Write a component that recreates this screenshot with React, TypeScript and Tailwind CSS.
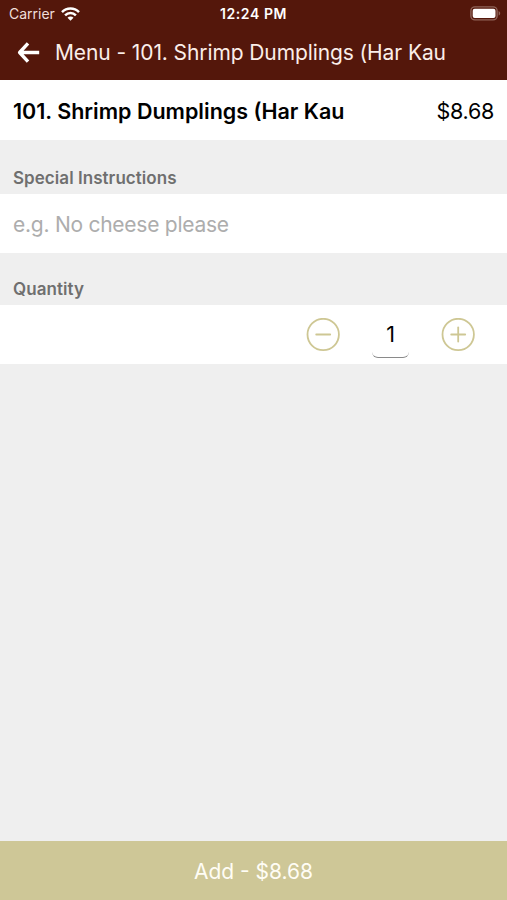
import { useState } from 'react';

const ITEM = { name: '101. Shrimp Dumplings (Har Kau', price: 8.68 };

function WifiIcon() {
  return (
    <svg width="19" height="14" viewBox="0 0 19 14" fill="none" stroke="#fff" strokeWidth="2.5">
      <path d="M1 5.1a12 12 0 0 1 17 0" />
      <path d="M4.1 8.3a7.6 7.6 0 0 1 10.8 0" />
      <path d="M9.5 13.8 6.5 10.8a4.2 4.2 0 0 1 6 0z" fill="#fff" stroke="none" />
    </svg>
  );
}

function BatteryIcon() {
  return (
    <svg width="31" height="15" viewBox="0 0 31 15" fill="none">
      <rect x="0.9" y="0.9" width="26.2" height="13" rx="4" stroke="#8f6459" strokeWidth="1.4" />
      <rect x="2.7" y="2.7" width="22.8" height="9.4" rx="2" fill="#fff" />
      <path d="M28.6 5v4.6c1-.4 1.6-1.3 1.6-2.3S29.6 5.4 28.6 5z" fill="#8f6459" />
    </svg>
  );
}

function StatusBar() {
  return (
    <div className="relative flex h-[27px] items-center justify-between pl-[9px] pr-[6px] text-[14px] leading-none">
      <div className="flex items-center gap-[6px]">
        <span className="text-[#f0dfda]">Carrier</span>
        <WifiIcon />
      </div>
      <span className="absolute inset-x-0 pt-px text-center font-semibold tracking-[0.6px]">12:24 PM</span>
      <BatteryIcon />
    </div>
  );
}

function SectionLabel({ children }: { children: string }) {
  return (
    <h2 className="flex h-[54px] items-end px-[13px] pb-[6px] text-[17px] leading-[20px] font-semibold tracking-[0.05px] text-[#6f6f6f]">
      {children}
    </h2>
  );
}

function StepButton({ plus, onClick }: { plus?: boolean; onClick: () => void }) {
  return (
    <button onClick={onClick} aria-label={plus ? 'Increase' : 'Decrease'} className="size-[34px]">
      <svg width="34" height="34" viewBox="0 0 34 34" fill="none" stroke="#cec794" strokeWidth="1.8">
        <circle cx="17.2" cy="16.5" r="15.7" />
        <path d="M10.2 16.5h14" strokeLinecap="round" />
        {plus && <path d="M17.2 9.5v14" strokeLinecap="round" />}
      </svg>
    </button>
  );
}

export default function App() {
  const [quantity, setQuantity] = useState(1);

  return (
    <div className="flex h-[900px] w-[507px] flex-col overflow-hidden bg-[#efefef] font-['Inter',sans-serif] text-black">
      <header className="h-20 bg-[#54170b] text-white">
        <StatusBar />
        <div className="flex h-[51px] items-center pl-[17px]">
          <svg width="23" height="22" viewBox="0 0 23 22" fill="none" stroke="#fff" strokeWidth="3.4">
            <path d="M11 1.4 2.6 10.5l8.4 9.1M2.6 10.5H22.2" strokeLinejoin="round" />
          </svg>
          <h1 className="ml-[15px] pt-px text-[21px] leading-[28px] tracking-[-0.1px] whitespace-nowrap text-[#fbeee9]">
            Menu - {ITEM.name}
          </h1>
        </div>
      </header>

      <div className="flex h-[60px] items-center justify-between bg-white pt-[2px] pr-[13px] pl-[13px] text-[21.5px] whitespace-nowrap">
        <span className="font-semibold">{ITEM.name}</span>
        <span className="tracking-[-0.3px]">${ITEM.price.toFixed(2)}</span>
      </div>

      <SectionLabel>Special Instructions</SectionLabel>
      <input
        placeholder="e.g. No cheese please"
        className="h-[59px] bg-white px-[13px] pt-[2px] text-[21px] tracking-[-0.25px] outline-none placeholder:text-[#adadad]"
      />

      <div className="-mt-[2px]">
        <SectionLabel>Quantity</SectionLabel>
      </div>
      <div className="flex h-[59px] items-center justify-end bg-white pr-8">
        <StepButton onClick={() => setQuantity(Math.max(1, quantity - 1))} />
        <div className="mx-8 flex h-[47px] w-[37px] items-center justify-center rounded-[6px] border-b border-[#8a8a8a] text-[21.5px]">
          {quantity}
        </div>
        <StepButton plus onClick={() => setQuantity(quantity + 1)} />
      </div>

      <button className="mt-auto h-[59px] bg-[#cec797] pt-[2px] text-[21px] text-[#fffdf5]">
        Add - ${(ITEM.price * quantity).toFixed(2)}
      </button>
    </div>
  );
}
